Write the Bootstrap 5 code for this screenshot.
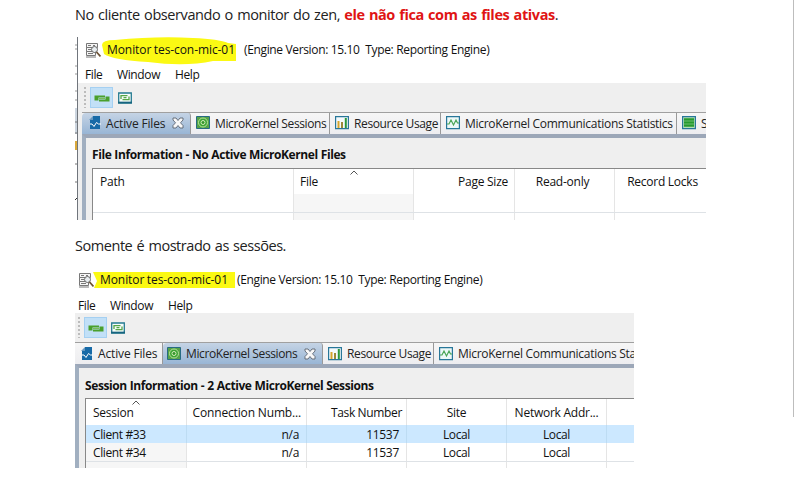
<!DOCTYPE html>
<html lang="pt-BR">
<head>
<meta charset="utf-8">
<meta name="viewport" content="width=device-width, initial-scale=1">
<title>Monitor Zen</title>
<link href="https://cdn.jsdelivr.net/npm/bootstrap@5.3.0/dist/css/bootstrap.min.css" rel="stylesheet">
<style>
body{width:794px;height:480px;overflow:hidden;background:#fff;color:#111;font-family:"Open Sans","Noto Sans",sans-serif;font-size:12px;letter-spacing:-.38px;line-height:16px}
.page-area{width:794px;height:480px}
.page-rule{right:0;top:0;width:1px;height:417px;background:#bdbdbd}
.post-line{font-size:14.5px;line-height:20px;letter-spacing:-.41px;word-spacing:.9px;color:#222;padding-left:75px;white-space:nowrap}
.post-line b{color:#e01414;letter-spacing:-.41px}
.line-one{height:37px;padding-top:5px}
.line-two{height:47px;padding-top:16px;letter-spacing:-.45px}
.shot{overflow:hidden;white-space:nowrap}
.shot-a{margin-left:75px;width:631px;height:183px}
.shot-b{margin-left:75px;width:559px;height:201px}
.edge-strip{width:3px;flex:none}
.win{flex:none;width:700px}
.shot-a .win{width:628px}
.shot-b .win{width:559px}
.title-row{height:26px}
.title-row svg{margin-top:-1px}
.shot-a .title-row{padding-left:7px}
.shot-b .title-row{padding-left:3px}
.marked{position:relative;z-index:0;flex:none;width:137px;margin-left:6px}
.marked svg{position:absolute;z-index:-1;margin:0}
.t-name{letter-spacing:-.08px;word-spacing:-.5px}
.t-engine{letter-spacing:-.36px;word-spacing:.1px}
.menu-row{height:20px;padding-top:4px}
.shot-b .menu-row{padding-top:5px}
.tool-row{height:29px;background:#efefef}
.grip{width:2px;height:21px;background:repeating-linear-gradient(#bcbcbc 0 2px,transparent 2px 4px)}
.tool-on{width:23px;height:21px;background:#c2e0f7;border:1px solid #a5d0f2}
.tab-row{height:22px;background:#f1f1f2;border-top:1px solid #a0a0a0;overflow:hidden}
.tab-item{height:21px;border-right:1px solid #999;flex:none;display:flex;align-items:center;padding-left:5px;color:#222;background:linear-gradient(#f6f6f6,#ededf0)}
.shot-b .tab-item{padding-top:1px}
.tab-item svg{flex:none;margin-right:5px;margin-top:-1px}
.tab-item .closer{margin:-1px 0 0 7px}
.tab-wide{letter-spacing:-.28px}
.tab-files{letter-spacing:-.15px}
.tab-on{background:linear-gradient(#c5d4e5,#98b5d5);border-top-left-radius:4px;border-top-right-radius:3px}
.frame{border-left:4px solid #a1afc0;border-top:4px solid #9ca7b8;background:#efefef}
.frame-title{height:30px;padding:9px 0 0 6px;font-weight:700;color:#111;letter-spacing:-.41px;word-spacing:.3px}
.shot-b .frame-title{padding-top:10px}
.grid-box{margin-left:6px;background:#fff;border:1px solid #888;border-right:0;border-bottom:0;overflow:hidden}
.grid-line{display:grid}
.grid-line>div{border-right:1px solid #e5e5e5;position:relative}
.head-line>div{padding-top:5px;letter-spacing:-.25px}
.shot-b .head-line>div{padding-top:6px}
.body-line>div{padding-top:2px}
.num-cell{text-align:right;padding-right:7px;letter-spacing:-.3px}
.files-cols{grid-template-columns:201px 120px 101px 100px 100px}
.sess-cols{grid-template-columns:101px 120px 100px 100px 100px 100px}
.sorter{position:absolute;top:1px;left:50%;margin-left:-4px}
.shade{background:#f6f6f6}
.chosen{background:#cce8ff}
.chosen>div{border-color:#bddcf3!important}
</style>
</head>
<body>
<svg width="0" height="0" class="position-absolute">
<defs>
<symbol id="i-monitor" viewBox="0 0 16 16"><path d="M1.500 1.500h11v4h-11zM1.500 5.500h8v4h-8zM1.500 9.500h9v4h-9z" fill="#f5f5f5" stroke="#777"/><path d="M3 3.500h3M8 3.500h2M3 7.500h3M3 11.500h5M1 15h10" stroke="#777"/><circle cx="9.500" cy="7.500" r="3" fill="#e8edf0" stroke="#666"/><path d="M11.500 10l4 4.500" stroke="#6b5134" stroke-width="1.800"/></symbol>
<symbol id="i-link" viewBox="0 0 16 10"><path d="M.5 2.500h10.500v2H4.500v3h-4zM15.500 8.500H5v-2h6.500v-3h4z" fill="#49a02c"/><path d="M5 5.500h6" stroke="#79bb57"/></symbol>
<symbol id="i-linkbox" viewBox="0 0 14 12"><path d="M.7 1h12.600v10H.7z" fill="#f6fcfb" stroke="#257b91" stroke-width="1.300"/><path d="M0 10.500h14" stroke="#17647f" stroke-width="1.700"/><path d="M3 7V3.700h6.500M11 4.500v3.200H4.500M5.500 5.700h3" fill="none" stroke="#56a646" stroke-width="1.300"/></symbol>
<symbol id="i-file" viewBox="0 0 12 14"><path d="M4 0h7v13H1V4h3z" fill="#176aa7"/><path d="M0 4l4-4v4z" fill="#6798c0"/><path d="M1 8h2l2 2.500 2.500-4L9.500 8H12" fill="none" stroke="#fff"/></symbol>
<symbol id="i-session" viewBox="0 0 14 14"><path d="M.5.5h13v12H.5z" fill="#55a247" stroke="#276b83"/><circle cx="7" cy="6.500" r="4.500" fill="#3da534" stroke="#b8e29c"/><circle cx="7" cy="6.500" r="2" fill="#35952c" stroke="#d4edb9"/></symbol>
<symbol id="i-bars" viewBox="0 0 14 14"><path d="M.6.6h12.800v12H.6z" fill="#f5fafc" stroke="#287799" stroke-width="1.200"/><path d="M3.500 12V5" stroke="#d6a52b" stroke-width="2"/><path d="M7 12V6" stroke="#9b8938" stroke-width="2"/><path d="M10.800 12V2" stroke="#2b973b" stroke-width="2"/></symbol>
<symbol id="i-wave" viewBox="0 0 14 14"><path d="M.6.6h12.800v12H.6z" fill="#eef8f8" stroke="#287799" stroke-width="1.200"/><path d="M1 8h2l2-4 2.500 5L10 4l1.500 3H13" fill="none" stroke="#4ba556" stroke-width="1.200"/></symbol>
<symbol id="i-stack" viewBox="0 0 14 14"><path d="M.6.6h12.800v12H.6z" fill="#b5dfb9" stroke="#287799" stroke-width="1.200"/><path d="M2 3.500h10M2 6.500h10M2 9.500h10" stroke="#269b2e" stroke-width="2.300"/></symbol>
<symbol id="i-close" viewBox="0 0 12 12"><path d="M1 1h3l2 2.500L8 1h3v2L8.500 5.800 11 8.500V11H8L6 8.500 4 11H1V8.500l2.500-2.700L1 3z" fill="#f8f8f8" stroke="#5c6470" stroke-width=".9"/></symbol>
<symbol id="i-sort" viewBox="0 0 8 5"><path d="M.5 4.500L4 1l3.500 3.500" fill="none" stroke="#555"/></symbol>
</defs>
</svg>
<main class="page-area position-relative">
<div class="page-rule position-absolute"></div>
<p class="post-line line-one mb-0">No cliente observando o monitor do zen, <b>ele não fica com as files ativas</b>.</p>

<section class="shot shot-a d-flex">
<svg class="edge-strip" width="3" height="183"><path d="M2.500 0v183" stroke="#70757c"/><path d="M0 8h2M0 12h2M0 29h2M0 37h2M0 54h2M0 63h2" stroke="#999"/><path d="M0 71h2v26H0z" fill="#ccd5df"/><path d="M0 85h2M0 96h2M0 127h2M0 145h2" stroke="#777"/><path d="M0 104h2v9H0z" fill="#d9a93c"/><path d="M0 163l2-2" stroke="#333"/></svg>
<div class="win">
<div class="title-row d-flex align-items-center">
<svg width="16" height="16"><use href="#i-monitor"/></svg>
<span class="marked"><svg style="left:-6px;top:-6px" width="136" height="29"><path d="M1 9Q1 4 14 4Q56 0 92 2Q118 3 127 7L135 8V25L112 25Q84 31 47 26Q12 24 3 18Z" fill="#fbf913"/></svg><span class="t-name">Monitor tes-con-mic-01</span></span>
<span class="t-engine">(Engine Version: 15.10&nbsp; Type: Reporting Engine)</span>
</div>
<div class="menu-row d-flex" style="padding-left:7px"><span style="width:32px">File</span><span style="width:58px">Window</span><span>Help</span></div>
<div class="tool-row d-flex align-items-center" style="padding-left:6px"><span class="grip"></span><span class="tool-on d-flex align-items-center justify-content-center ms-1" style="margin-right:5px"><svg width="16" height="10"><use href="#i-link"/></svg></span><svg width="14" height="12"><use href="#i-linkbox"/></svg></div>
<div style="padding-left:4px;background:#efefef">
<div class="tab-row d-flex">
<div class="tab-item tab-on tab-files" style="width:109px;padding-left:7px"><svg width="12" height="14"><use href="#i-file"/></svg>Active Files<svg class="closer" width="12" height="12"><use href="#i-close"/></svg></div>
<div class="tab-item" style="width:139px"><svg width="14" height="14"><use href="#i-session"/></svg>MicroKernel Sessions</div>
<div class="tab-item" style="width:111px"><svg width="14" height="14"><use href="#i-bars"/></svg>Resource Usage</div>
<div class="tab-item tab-wide" style="width:236px"><svg width="14" height="14"><use href="#i-wave"/></svg>MicroKernel Communications Statistics</div>
<div class="tab-item border-end-0" style="width:29px"><svg width="14" height="14"><use href="#i-stack"/></svg>S</div>
</div>
<div class="frame">
<div class="frame-title">File Information - No Active MicroKernel Files</div>
<div class="grid-box">
<div class="grid-line files-cols head-line" style="height:25px"><div style="padding-left:7px">Path</div><div style="padding-left:6px">File<svg class="sorter" width="8" height="5"><use href="#i-sort"/></svg></div><div class="text-end" style="padding-right:6px">Page Size</div><div class="text-center pe-1">Read-only</div><div class="text-center pe-1">Record Locks</div></div>
<div class="grid-line files-cols border-bottom" style="height:19px"><div></div><div class="shade"></div><div></div><div></div><div></div></div>
<div class="grid-line files-cols" style="height:19px"><div></div><div class="shade"></div><div></div><div></div><div></div></div>
</div></div></div></div>
</section>

<p class="post-line line-two mb-0">Somente é mostrado as sessões.</p>

<section class="shot shot-b">
<div class="win">
<div class="title-row d-flex align-items-center">
<svg width="16" height="16"><use href="#i-monitor"/></svg>
<span class="marked"><svg style="left:-8px;top:0" width="144" height="18"><path d="M1 0H143V16H2L5 9Z" fill="#fbf913"/></svg><span class="t-name">Monitor tes-con-mic-01</span></span>
<span class="t-engine">(Engine Version: 15.10&nbsp; Type: Reporting Engine)</span>
</div>
<div class="menu-row d-flex" style="padding-left:3px"><span style="width:32px">File</span><span style="width:58px">Window</span><span>Help</span></div>
<div class="tool-row d-flex align-items-center" style="padding-left:3px"><span class="grip"></span><span class="tool-on d-flex align-items-center justify-content-center ms-1" style="margin-right:4px"><svg width="16" height="10"><use href="#i-link"/></svg></span><svg width="14" height="12"><use href="#i-linkbox"/></svg></div>
<div class="tab-row d-flex">
<div class="tab-item tab-files" style="width:88px;padding-left:6px"><svg width="12" height="14"><use href="#i-file"/></svg>Active Files</div>
<div class="tab-item tab-on" style="width:160px;padding-left:4px"><svg width="14" height="14"><use href="#i-session"/></svg>MicroKernel Sessions<svg class="closer" width="12" height="12"><use href="#i-close"/></svg></div>
<div class="tab-item" style="width:111px"><svg width="14" height="14"><use href="#i-bars"/></svg>Resource Usage</div>
<div class="tab-item tab-wide border-end-0" style="width:200px"><svg width="14" height="14"><use href="#i-wave"/></svg>MicroKernel Communications Sta</div>
</div>
<div class="frame">
<div class="frame-title">Session Information - 2 Active MicroKernel Sessions</div>
<div class="grid-box">
<div class="grid-line sess-cols head-line" style="height:26px"><div style="padding-left:7px">Session<svg class="sorter" width="8" height="5"><use href="#i-sort"/></svg></div><div class="text-end" style="padding-right:5px;letter-spacing:-.16px">Connection Numb...</div><div class="text-end" style="padding-right:4px;letter-spacing:-.35px">Task Number</div><div class="text-center">Site</div><div class="text-center">Network Addr...</div><div></div></div>
<div class="grid-line sess-cols chosen body-line" style="height:18px"><div style="padding-left:7px">Client #33</div><div class="num-cell">n/a</div><div class="num-cell">11537</div><div class="text-center">Local</div><div class="text-center">Local</div><div></div></div>
<div class="grid-line sess-cols border-bottom body-line" style="height:19px"><div class="shade" style="padding-left:7px">Client #34</div><div class="num-cell">n/a</div><div class="num-cell">11537</div><div class="text-center">Local</div><div class="text-center">Local</div><div></div></div>
<div class="grid-line sess-cols" style="height:19px"><div class="shade"></div><div></div><div></div><div></div><div></div><div></div></div>
</div></div></div>
</section>
</main>
<script src="https://cdn.jsdelivr.net/npm/bootstrap@5.3.0/dist/js/bootstrap.bundle.min.js"></script>
</body>
</html>
